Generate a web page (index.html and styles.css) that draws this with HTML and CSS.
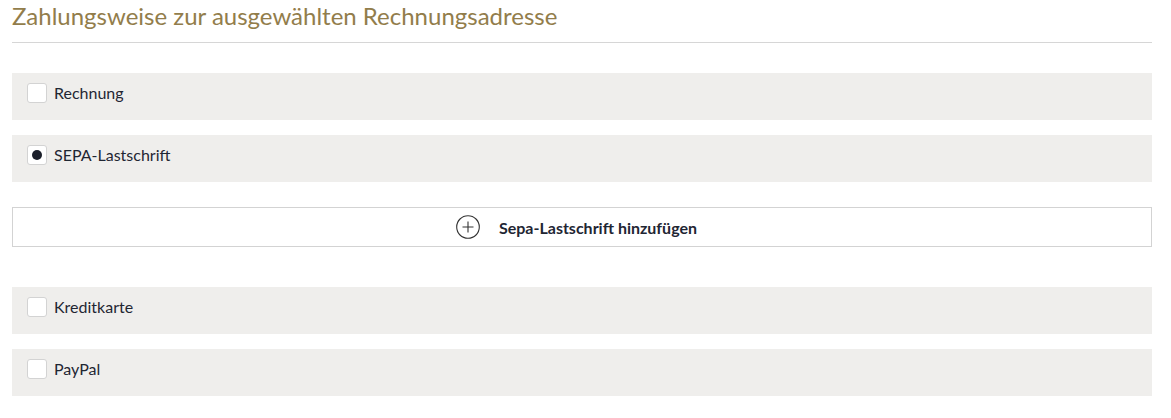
FILE: index.html
```html
<!DOCTYPE html>
<html lang="de">
<head>
<meta charset="utf-8">
<title>Zahlungsweise</title>
<link rel="stylesheet" href="styles.css">
</head>
<body>
<div class="page">
  <h2 class="title">Zahlungsweise zur ausgewählten Rechnungsadresse</h2>
  <div class="divider"></div>
  <div class="options">
    <label class="option">
      <span class="box"></span>
      <span class="label">Rechnung</span>
    </label>
    <label class="option">
      <span class="box"><span class="dot"></span></span>
      <span class="label">SEPA-Lastschrift</span>
    </label>
    <button class="add" type="button">
      <svg class="plus" width="24" height="24" viewBox="0 0 24 24" aria-hidden="true">
        <circle cx="12" cy="12" r="11.3" fill="none" stroke="#333" stroke-width="1.1"/>
        <path d="M12 6.5v11M6.5 12h11" stroke="#333" stroke-width="1.1" fill="none"/>
      </svg>
      <span>Sepa-Lastschrift hinzufügen</span>
    </button>
    <label class="option option-after">
      <span class="box"></span>
      <span class="label">Kreditkarte</span>
    </label>
    <label class="option">
      <span class="box"></span>
      <span class="label">PayPal</span>
    </label>
  </div>
</div>
</body>
</html>
```

FILE: styles.css
```css
html, body {
  margin: 0;
  padding: 0;
  background: #ffffff;
}
body {
  font-family: Lato, "Open Sans", sans-serif;
  color: #1f2633;
}
.page {
  width: 1140px;
  margin-left: 12px;
}
.title {
  margin: 0;
  padding-top: 1px;
  font-size: 24px;
  line-height: 30px;
  font-weight: 400;
  color: #927d4b;
}
.divider {
  margin-top: 11px;
  height: 1px;
  background: #d6d6d6;
}
.options {
  display: flex;
  flex-direction: column;
  padding-top: 30px;
}
.option {
  display: flex;
  align-items: center;
  gap: 7px;
  height: 47px;
  box-sizing: border-box;
  padding: 10px 15px 17px;
  background: #efeeec;
  margin-bottom: 15px;
  font-size: 16px;
  line-height: 20px;
}
.box {
  width: 20px;
  height: 20px;
  box-sizing: border-box;
  border: 1px solid #d3d3d3;
  border-radius: 3px;
  background: #fff;
  display: flex;
  align-items: center;
  justify-content: center;
  flex: none;
}
.dot {
  width: 10px;
  height: 10px;
  border-radius: 50%;
  background: #1b1f2a;
}
.add {
  margin-top: 10px;
  margin-bottom: 40px;
  height: 40px;
  border: 1px solid #d3d3d3;
  background: #fff;
  display: flex;
  align-items: center;
  justify-content: center;
  gap: 19px;
  padding: 0 11px 0 0;
  font-family: Lato, "Open Sans", sans-serif;
  font-size: 16px;
  font-weight: 700;
  color: #1f2633;
  cursor: pointer;
}
.plus {
  flex: none;
}
```
